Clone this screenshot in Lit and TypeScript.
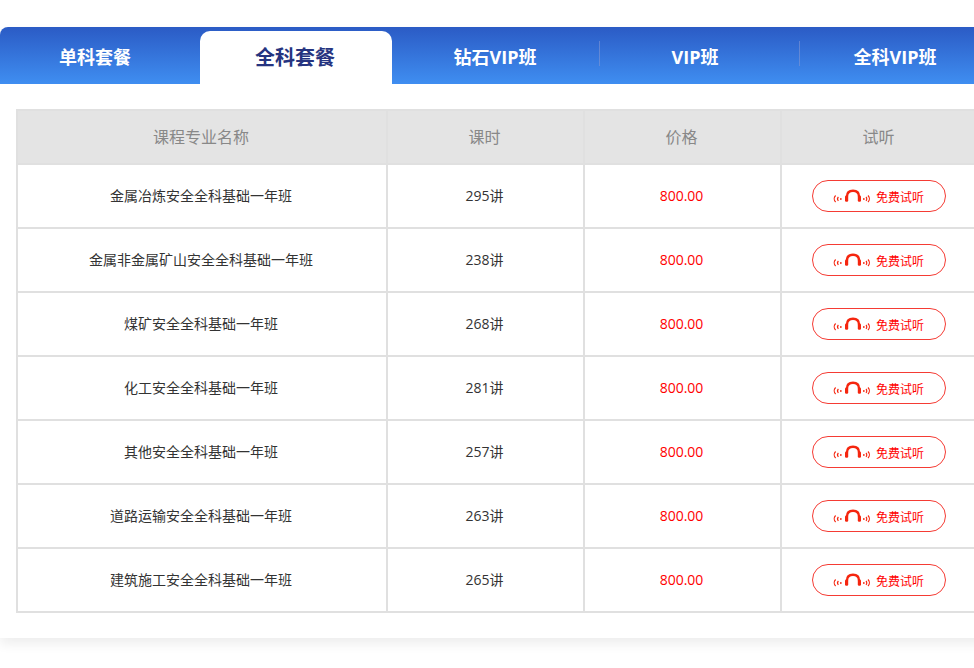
import { LitElement, html, css, svg } from "lit";
import { customElement } from "lit/decorators.js";

const tabs = ["单科套餐", "全科套餐", "钻石VIP班", "VIP班", "全科VIP班"];
const rows: [string, string][] = [
  ["金属冶炼安全全科基础一年班", "295讲"],
  ["金属非金属矿山安全全科基础一年班", "238讲"],
  ["煤矿安全全科基础一年班", "268讲"],
  ["化工安全全科基础一年班", "281讲"],
  ["其他安全全科基础一年班", "257讲"],
  ["道路运输安全全科基础一年班", "263讲"],
  ["建筑施工安全全科基础一年班", "265讲"],
];

const icon = svg`<svg class="icon" viewBox="0 0 37 14" width="37" height="14" fill="none" stroke="#f5260f">
  <path d="M14 7.5C14 3.6 16.2 1.7 20 1.7S26 3.6 26 7.5" stroke-width="2.4"/>
  <rect x="12" y="6.6" width="3.2" height="6.2" rx="1.2" fill="#f5260f" stroke="none"/>
  <rect x="24.8" y="6.6" width="3.2" height="6.2" rx="1.2" fill="#f5260f" stroke="none"/>
  <path d="M2.6 6.5C0.8 8.3 0.8 11.2 2.6 13" stroke-width="1.2"/>
  <path d="M5.4 8C4.4 9 4.4 10.8 5.4 11.8" stroke-width="1.2"/>
  <rect x="7" y="9.2" width="1.6" height="1.6" fill="#f5260f" stroke="none"/>
  <path d="M35 6.5C36.8 8.3 36.8 11.2 35 13" stroke-width="1.2"/>
  <path d="M33 8C34 9 34 10.8 33 11.8" stroke-width="1.2"/>
  <rect x="30" y="9.2" width="1.6" height="1.6" fill="#f5260f" stroke="none"/>
</svg>`;

@customElement("app-root")
export class AppRoot extends LitElement {
  static styles = css`
    :host {
      display: block;
      width: 974px;
      height: 668px;
      overflow: hidden;
      background: #fff;
      font-family: "Open Sans", "Noto Sans CJK SC", sans-serif;
    }
    .page {
      width: 1010px;
      padding-top: 27px;
    }
    .card {
      height: 611px;
      border-radius: 8px 8px 0 0;
      background: #fff;
      box-shadow: 0 6px 12px rgba(0, 0, 0, 0.07);
    }
    .tabs {
      display: flex;
      gap: 8px;
      height: 57px;
      border-radius: 8px 0 0 0;
      background: linear-gradient(#2b5bc5, #3f8ef1);
    }
    .tab {
      position: relative;
      flex: 0 0 192px;
      margin-top: 4px;
      height: 53px;
      box-sizing: border-box;
      padding: 13px 2px 0 0;
      text-align: center;
      font-size: 18px;
      line-height: 27px;
      font-weight: 700;
      color: #fff;
    }
    .tab.active {
      background: #fff;
      border-radius: 10px 10px 0 0;
      font-size: 20px;
      color: #263480;
    }
    .tab.sep::before {
      content: "";
      position: absolute;
      left: -1px;
      top: 10px;
      width: 1px;
      height: 25px;
      background: rgba(130, 150, 210, 0.6);
    }
    .wrap {
      padding: 25px 0 0 16px;
    }
    table {
      border-collapse: collapse;
      table-layout: fixed;
      width: 961px;
      text-align: center;
    }
    th,
    td {
      border: 2px solid #e0e0e0;
      padding: 0 2px 0 0;
    }
    th {
      height: 50px;
      padding-bottom: 2px;
      background: #e4e4e4;
      font-size: 16px;
      font-weight: 400;
      color: #888;
    }
    td {
      height: 60px;
      padding-bottom: 2px;
      font-size: 14px;
      color: #333;
    }
    .c1 { width: 370px; }
    .c2, .c3, .c4 { width: 197px; }
    td.price { color: #f00; }
    td.action { padding-bottom: 0; height: 62px; }
    .btn {
      display: inline-flex;
      align-items: center;
      justify-content: center;
      gap: 6px;
      width: 134px;
      height: 32px;
      box-sizing: border-box;
      vertical-align: middle;
      border: 1px solid #f53b34;
      border-radius: 16px;
      background: #fff;
      color: #f00;
      font-size: 12px;
    }
    .label { padding-top: 2px; }
    .icon { display: block; }
  `;

  render() {
    return html`<div class="page">
      <div class="card">
        <div class="tabs">
          ${tabs.map(
            (t, i) =>
              html`<div class="tab ${i === 1 ? "active" : ""} ${i >= 3 ? "sep" : ""}">${t}</div>`
          )}
        </div>
        <div class="wrap">
          <table>
            <colgroup>
              <col class="c1" /><col class="c2" /><col class="c3" /><col class="c4" />
            </colgroup>
            <thead>
              <tr><th>课程专业名称</th><th>课时</th><th>价格</th><th>试听</th></tr>
            </thead>
            <tbody>
              ${rows.map(
                ([name, n]) => html`<tr>
                  <td>${name}</td>
                  <td>${n}</td>
                  <td class="price">800.00</td>
                  <td class="action"><span class="btn">${icon}<span class="label">免费试听</span></span></td>
                </tr>`
              )}
            </tbody>
          </table>
        </div>
      </div>
    </div>`;
  }
}
